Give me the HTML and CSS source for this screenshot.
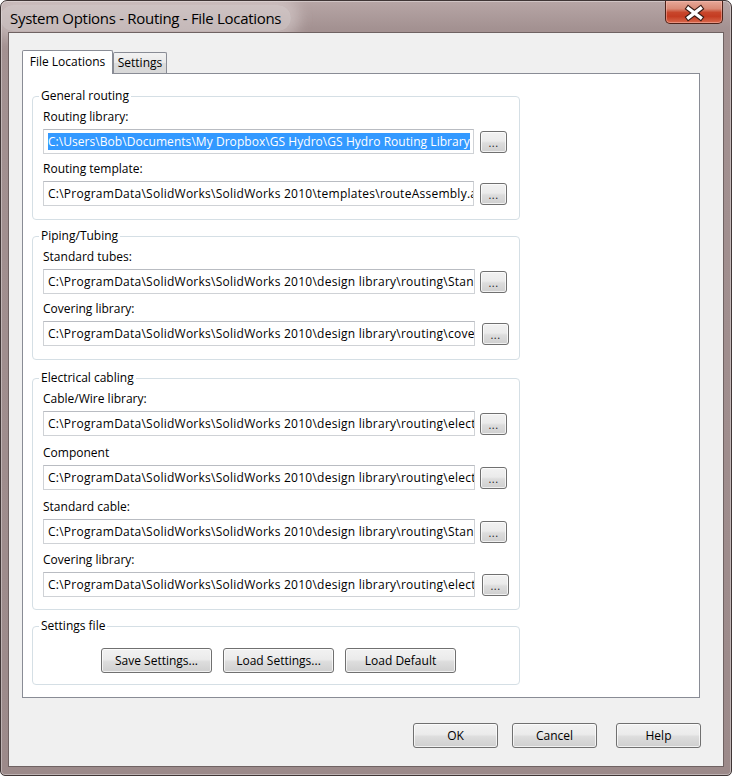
FILE: index.html
```html
<!DOCTYPE html>
<html>
<head>
<meta charset="utf-8">
<title>System Options - Routing - File Locations</title>
<link rel="stylesheet" href="styles.css">
</head>
<body>
<div class="window">
  <div class="titlebar">
    <span class="title">System Options - Routing - File Locations</span>
    <div class="close">
      <svg width="58" height="23" viewBox="0 0 58 23">
        <path d="M23.5 7.5 L35.5 16.5 M35.5 7.5 L23.5 16.5" stroke="#3a1c16" stroke-width="5.6" stroke-linecap="square" fill="none"/>
        <path d="M23.5 7.5 L35.5 16.5 M35.5 7.5 L23.5 16.5" stroke="#ffffff" stroke-width="3.4" stroke-linecap="square" fill="none"/>
      </svg>
    </div>
  </div>
  <div class="client">
    <div class="tabs">
      <div class="tab active">File Locations</div>
      <div class="tab inactive">Settings</div>
    </div>
    <div class="panel">
      <fieldset class="group g-general">
        <legend>General routing</legend>
        <div class="row">
          <div class="label">Routing library:</div>
          <div class="line">
            <div class="field narrow selected"><span class="sel">C:\Users\Bob\Documents\My Dropbox\GS Hydro\GS Hydro Routing Library</span></div>
            <div class="dots wide-gap">...</div>
          </div>
        </div>
        <div class="row">
          <div class="label">Routing template:</div>
          <div class="line">
            <div class="field narrow">C:\ProgramData\SolidWorks\SolidWorks 2010\templates\routeAssembly.asm</div>
            <div class="dots wide-gap">...</div>
          </div>
        </div>
      </fieldset>

      <fieldset class="group g-piping">
        <legend>Piping/Tubing</legend>
        <div class="row">
          <div class="label">Standard tubes:</div>
          <div class="line">
            <div class="field">C:\ProgramData\SolidWorks\SolidWorks 2010\design library\routing\Standard tubes</div>
            <div class="dots">...</div>
          </div>
        </div>
        <div class="row">
          <div class="label">Covering library:</div>
          <div class="line">
            <div class="field">C:\ProgramData\SolidWorks\SolidWorks 2010\design library\routing\covering</div>
            <div class="dots shifted">...</div>
          </div>
        </div>
      </fieldset>

      <fieldset class="group g-electrical">
        <legend>Electrical cabling</legend>
        <div class="row">
          <div class="label">Cable/Wire library:</div>
          <div class="line">
            <div class="field">C:\ProgramData\SolidWorks\SolidWorks 2010\design library\routing\electrical\cable.xml</div>
            <div class="dots">...</div>
          </div>
        </div>
        <div class="row">
          <div class="label">Component</div>
          <div class="line">
            <div class="field">C:\ProgramData\SolidWorks\SolidWorks 2010\design library\routing\electrical\components.xml</div>
            <div class="dots">...</div>
          </div>
        </div>
        <div class="row">
          <div class="label">Standard cable:</div>
          <div class="line">
            <div class="field">C:\ProgramData\SolidWorks\SolidWorks 2010\design library\routing\Standard cables.xml</div>
            <div class="dots">...</div>
          </div>
        </div>
        <div class="row last">
          <div class="label">Covering library:</div>
          <div class="line">
            <div class="field">C:\ProgramData\SolidWorks\SolidWorks 2010\design library\routing\electrical\covering.xml</div>
            <div class="dots shifted">...</div>
          </div>
        </div>
      </fieldset>

      <fieldset class="group g-settings">
        <legend>Settings file</legend>
        <div class="setbtns">
          <div class="btn sbtn">Save Settings...</div>
          <div class="btn sbtn">Load Settings...</div>
          <div class="btn sbtn">Load Default</div>
        </div>
      </fieldset>
    </div>
    <div class="footer">
      <div class="btn fbtn">OK</div>
      <div class="btn fbtn cancel">Cancel</div>
      <div class="btn fbtn help">Help</div>
    </div>
  </div>
</div>
</body>
</html>
```

FILE: styles.css
```css
html, body {
  margin: 0;
  padding: 0;
  background: #ffffff;
}

body {
  font-family: "Open Sans", "Noto Sans", "DejaVu Sans", sans-serif;
  font-size: 12px;
  color: #000;
}

.window {
  width: 732px;
  height: 776px;
  box-sizing: border-box;
  border: 1px solid #3f3535;
  border-radius: 7px 7px 5px 5px;
  background: linear-gradient(#b7a6a6 0px, #a39191 28px, #9c8a8a 100%);
  box-shadow: inset 0 0 0 1px rgba(255, 255, 255, 0.35);
  padding: 0 7px 8px 7px;
  display: flex;
  flex-direction: column;
  overflow: hidden;
}

.titlebar {
  height: 31px;
  flex: none;
  display: flex;
  justify-content: space-between;
  align-items: flex-start;
}

.title {
  display: inline-block;
  font-size: 15px;
  letter-spacing: -0.3px;
  line-height: 20px;
  padding: 3px 10px;
  margin: 4px 0 0 -8px;
  border-radius: 14px;
  background: rgba(232, 225, 225, 0.5);
  box-shadow: 0 0 14px 9px rgba(232, 225, 225, 0.45);
  color: #000;
}

.close {
  width: 58px;
  height: 23px;
  margin-right: 1px;
  box-sizing: border-box;
  border: 1px solid #4e2219;
  border-top: none;
  border-radius: 0 0 5px 5px;
  background: linear-gradient(#e6a898 0%, #d98a76 35%, #c8462b 52%, #c43c22 70%, #d9694d 100%);
  box-shadow: inset 0 0 0 1px rgba(255, 200, 190, 0.45);
  overflow: hidden;
}

.close svg {
  display: block;
  margin-left: -1px;
}

.client {
  flex: 1;
  background: #f0f0f0;
  border: 1px solid #6f6262;
  display: flex;
  flex-direction: column;
}

.tabs {
  display: flex;
  align-items: flex-end;
  height: 23px;
  margin: 17px 0 0 13px;
}

.tab {
  box-sizing: border-box;
  border: 1px solid #898c95;
  border-bottom: none;
  text-align: center;
  white-space: nowrap;
}

.tab.active {
  width: 91px;
  height: 24px;
  margin-bottom: -1px;
  line-height: 22px;
  background: #ffffff;
  position: relative;
  z-index: 1;
  border-radius: 2px 2px 0 0;
}

.tab.inactive {
  width: 54px;
  height: 21px;
  line-height: 20px;
  background: linear-gradient(#f3f3f3, #e8e8e8 50%, #dcdcdc 50%, #d8d8d8);
  border-radius: 2px 2px 0 0;
}

.panel {
  box-sizing: border-box;
  width: 678px;
  height: 625px;
  margin-left: 13px;
  background: #ffffff;
  border: 1px solid #898c95;
  padding: 0 0 0 9px;
  display: flex;
  flex-direction: column;
  align-items: flex-start;
}

.group {
  box-sizing: border-box;
  width: 488px;
  min-width: 0;
  margin: 0;
  border: 1px solid #d5dfe5;
  border-radius: 4px;
  padding: 5px 10px 13px 10px;
}

.group legend {
  padding: 0 2px;
  margin-left: -4px;
  line-height: 16px;
}

.g-general { margin-top: 14px; }
.g-piping { margin-top: 8px; }
.g-electrical { margin-top: 10px; padding-bottom: 12px; }
.g-electrical .row + .row { margin-top: 9px; }
.g-electrical .row.last { margin-top: 8px; }
.g-settings { margin-top: 8px; padding-top: 14px; padding-bottom: 11px; }

.label {
  height: 16px;
  line-height: 16px;
  margin-bottom: 4px;
  white-space: nowrap;
}

.row + .row { margin-top: 7px; }

.line {
  display: flex;
  align-items: center;
  height: 25px;
}

.field {
  box-sizing: border-box;
  width: 432px;
  height: 25px;
  flex: none;
  border: 1px solid #cfd2d6;
  border-top-color: #b9bcc2;
  background: #ffffff;
  padding: 0 1px 0 4px;
  overflow: hidden;
  white-space: nowrap;
  line-height: 23px;
  letter-spacing: 0.25px;
}

.field.narrow { width: 431px; }
.field.selected { letter-spacing: 0.05px; }

.sel {
  background: #3399ff;
  color: #ffffff;
}

.dots {
  box-sizing: border-box;
  width: 27px;
  height: 22px;
  flex: none;
  margin-left: 5px;
  border: 1px solid #707070;
  border-radius: 3px;
  background: linear-gradient(#f2f2f2, #ebebeb 45%, #dddddd 55%, #cfcfcf);
  box-shadow: inset 0 0 0 1px rgba(255, 255, 255, 0.7);
  text-align: center;
  font-size: 11px;
  line-height: 22px;
  color: #222;
  letter-spacing: 0.5px;
}

.dots.wide-gap { margin-left: 6px; }
.dots.shifted { margin-left: 7px; }

.btn {
  box-sizing: border-box;
  height: 25px;
  border: 1px solid #707070;
  border-radius: 3px;
  background: linear-gradient(#f2f2f2, #ebebeb 45%, #dddddd 55%, #cfcfcf);
  box-shadow: inset 0 0 0 1px rgba(255, 255, 255, 0.7);
  display: flex;
  align-items: center;
  justify-content: center;
  white-space: nowrap;
}

.setbtns {
  display: flex;
  gap: 11px;
  padding-left: 58px;
}

.sbtn { width: 111px; }

.footer {
  display: flex;
  justify-content: flex-end;
  margin-top: 25px;
  padding-right: 22px;
}

.fbtn { width: 85px; }
.fbtn.cancel { margin-left: 14px; }
.fbtn.help { margin-left: 19px; }
```
